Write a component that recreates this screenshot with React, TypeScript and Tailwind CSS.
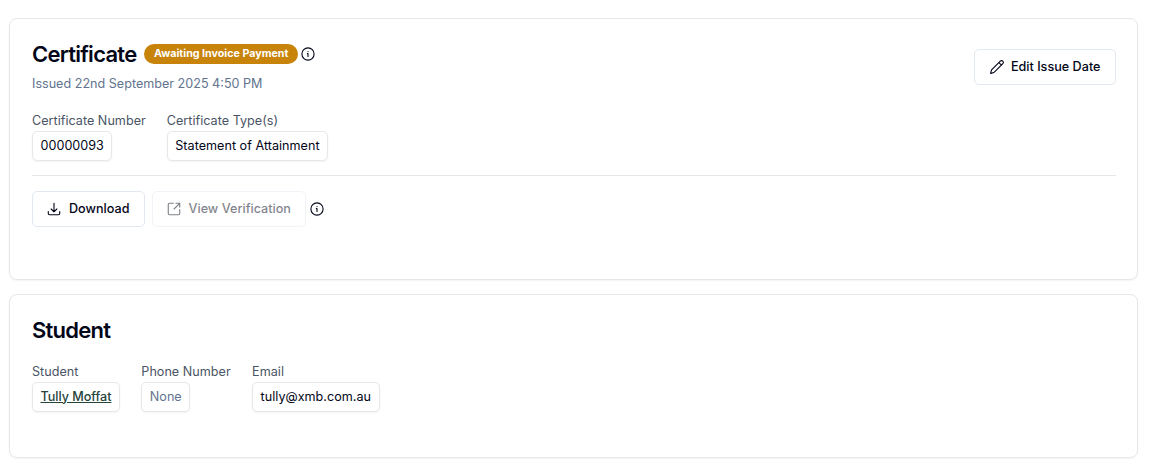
import { ReactNode } from "react";

interface IconProps {
    className?: string;
    children: ReactNode;
}

function Icon({ className = "", children }: IconProps) {
    return (
        <svg
            viewBox="1 1 22 22"
            fill="none"
            stroke="currentColor"
            strokeWidth={1.75}
            strokeLinecap="round"
            strokeLinejoin="round"
            className={`size-3.5 shrink-0 overflow-visible ${className}`}
        >
            {children}
        </svg>
    );
}

function InfoIcon({ className }: { className?: string }) {
    return (
        <Icon className={className}>
            <circle cx="12" cy="12" r="9.6" />
            <path d="M11 11.2h1v4.6M12 8v.2" />
        </Icon>
    );
}

interface FieldProps {
    label: string;
    children: ReactNode;
}

function Field({ label, children }: FieldProps) {
    return (
        <div className="flex flex-col items-start">
            <span className="h-5 text-[12.6px] leading-5 tracking-[0.02px] text-gray-600">{label}</span>
            <div className="flex h-[30px] items-center rounded-[5px] border border-gray-200 px-[7.5px] text-[12.6px] tracking-[0.02px] text-slate-950 shadow-xs">
                {children}
            </div>
        </div>
    );
}

export default function App() {
    return (
        <div className="flex h-[468px] flex-col gap-3.5 bg-white pt-[18px] pr-4 pl-[9px] font-['Inter',sans-serif] text-slate-950">
            {/* Certificate */}
            <section className="h-[262px] rounded-lg border border-gray-200 pr-[21px] pl-[22px] shadow-xs">
                <div className="flex items-start justify-between">
                    <div className="pt-[21px]">
                        <div className="flex h-7 items-center">
                            <h1 className="text-[22px] font-semibold tracking-[-0.74px]">Certificate</h1>
                            <span className="ml-2 flex h-5 items-center rounded-full bg-[#c8830a] px-[9.5px] text-[10.7px] font-bold text-white">
                                Awaiting Invoice Payment
                            </span>
                            <InfoIcon className="ml-[3px]" />
                        </div>
                        <p className="mt-1.5 text-[12.6px] leading-5 text-slate-500">Issued 22nd September 2025 4:50 PM</p>
                    </div>
                    <button className="mt-[30px] flex h-9 items-center gap-[7px] rounded-[5px] border border-slate-200 px-[14.5px] text-[12.6px] font-medium tracking-[0.02px]">
                        <Icon>
                            <path d="M21.174 6.812a1 1 0 0 0-3.986-3.987L3.842 16.174a2 2 0 0 0-.5.83l-1.321 4.352a.5.5 0 0 0 .623.622l4.353-1.32a2 2 0 0 0 .83-.497zM15 5l4 4" />
                        </Icon>
                        Edit Issue Date
                    </button>
                </div>

                <div className="mt-[17px] flex gap-[21px]">
                    <Field label="Certificate Number">00000093</Field>
                    <Field label="Certificate Type(s)">Statement of Attainment</Field>
                </div>

                <div className="mt-[14px] border-t border-gray-200" />

                <div className="mt-[15px] flex items-center">
                    <button className="flex h-9 items-center gap-2 rounded-[5px] border border-slate-200 px-[14px] text-[12.6px] font-medium tracking-[0.02px]">
                        <Icon>
                            <path d="M3 16v3a2 2 0 0 0 2 2h14a2 2 0 0 0 2-2v-3M16.5 12 12 16.5 7.5 12M12 16.5V3" />
                        </Icon>
                        Download
                    </button>
                    <button disabled className="ml-[7px] flex h-9 items-center gap-2 rounded-[5px] border border-slate-200 px-[14px] text-[12.6px] font-medium tracking-[0.02px] opacity-50">
                        <Icon>
                            <path d="M21 13v6a2 2 0 0 1-2 2H5a2 2 0 0 1-2-2V5a2 2 0 0 1 2-2h6M21 3l-9 9M15 3h6v6" />
                        </Icon>
                        View Verification
                    </button>
                    <InfoIcon className="ml-1" />
                </div>
            </section>

            {/* Student */}
            <section className="h-[164px] rounded-lg border border-gray-200 px-[22px] pt-[21px] shadow-xs">
                <h2 className="text-[22px] leading-7 font-semibold tracking-[-0.74px]">Student</h2>
                <div className="mt-[18px] flex gap-[21.4px]">
                    <Field label="Student">
                        <a href="#" className="font-medium tracking-[-0.03px] text-[#25443a] underline">Tully Moffat</a>
                    </Field>
                    <Field label="Phone Number">
                        <span className="text-slate-500">None</span>
                    </Field>
                    <Field label="Email">tully@xmb.com.au</Field>
                </div>
            </section>
        </div>
    );
}
